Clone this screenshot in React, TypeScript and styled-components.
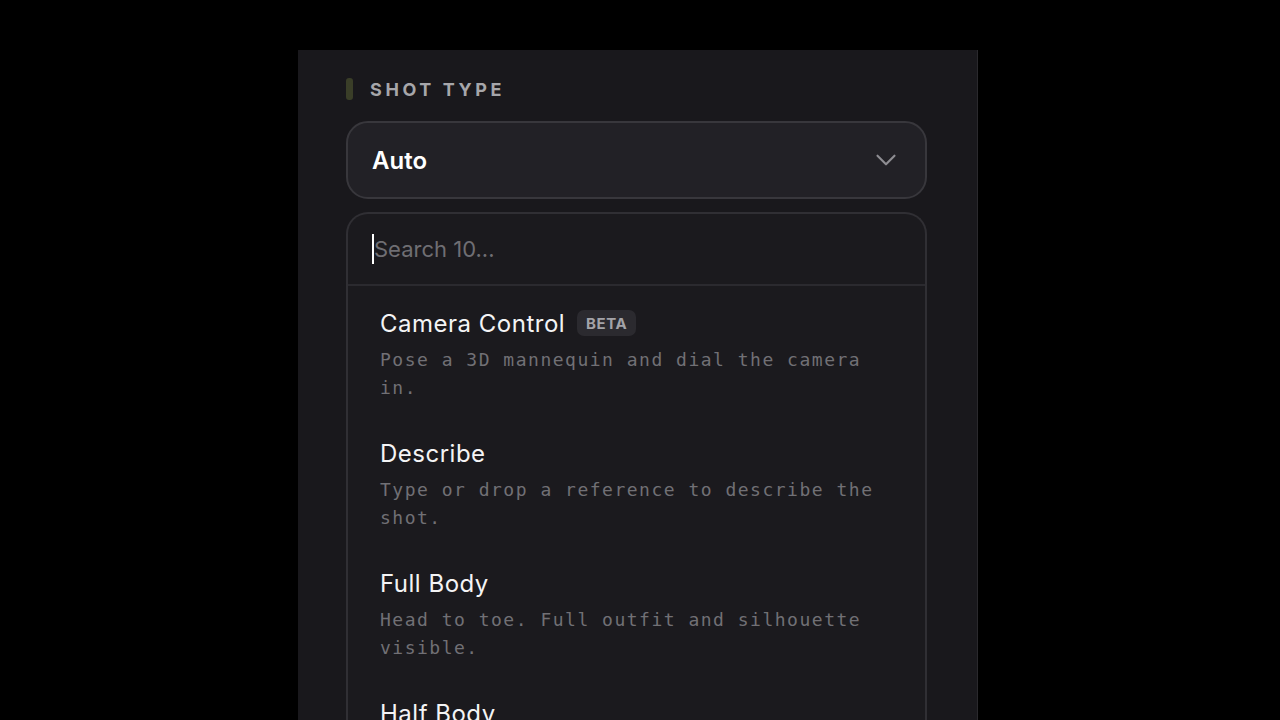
import { createGlobalStyle, styled } from 'styled-components'
import { ChevronDown } from 'lucide-react'

const GlobalStyle = createGlobalStyle`
  * {
    box-sizing: border-box;
  }

  html,
  body {
    margin: 0;
    padding: 0;
    background: #000;
    height: 100%;
    overflow: hidden;
  }

  body {
    font-family: Inter, 'Noto Sans', sans-serif;
    -webkit-font-smoothing: antialiased;
  }
`

const Page = styled.div`
  display: flex;
  justify-content: center;
  padding-top: 50px;
  height: 720px;
`

const Panel = styled.div`
  width: 680px;
  margin-left: -4px;
  min-height: 670px;
  background: #19181c;
  border-right: 1px solid #2a292d;
  padding: 28px 50px 0 48px;
  display: flex;
  flex-direction: column;
`

const SectionLabel = styled.div`
  display: flex;
  align-items: center;
  gap: 17px;
  height: 22px;
  flex-shrink: 0;

  span {
    font-size: 18px;
    font-weight: 700;
    letter-spacing: 0.2em;
    text-transform: uppercase;
    color: #a6a6aa;
  }
`

const LabelBar = styled.div`
  width: 7px;
  height: 22px;
  border-radius: 3px;
  background: #3a3e28;
`

const SelectButton = styled.button`
  margin-top: 21px;
  flex-shrink: 0;
  display: flex;
  align-items: center;
  justify-content: space-between;
  width: 100%;
  height: 78px;
  padding: 0 22px 0 24px;
  background: #222126;
  border: 2px solid #38373c;
  border-radius: 22px;
  color: #fff;
  font-family: Inter, sans-serif;
  font-size: 24px;
  font-weight: 600;
  cursor: pointer;

  svg {
    color: #8e8d92;
  }
`

const Dropdown = styled.div`
  margin-top: 13px;
  flex: 1;
  background: #1b1a1e;
  border: 2px solid #302f34;
  border-bottom: none;
  border-radius: 22px 22px 0 0;
  display: flex;
  flex-direction: column;
`

const SearchRow = styled.div`
  height: 72px;
  flex-shrink: 0;
  display: flex;
  align-items: center;
  padding: 0 24px;
  border-bottom: 2px solid #2b2a2f;
`

const Caret = styled.span`
  width: 2px;
  height: 30px;
  background: #fff;
  flex-shrink: 0;
`

const SearchInput = styled.input`
  width: 100%;
  padding: 0;
  background: transparent;
  border: none;
  outline: none;
  font-family: Inter, sans-serif;
  font-size: 22px;
  color: #fff;

  &::placeholder {
    color: #6f6e73;
  }
`

const OptionList = styled.ul`
  list-style: none;
  margin: 0;
  padding: 4px 0;
`

const OptionItem = styled.li`
  padding: 18px 32px;
  display: flex;
  flex-direction: column;
  gap: 8px;
`

const OptionTitle = styled.div`
  display: flex;
  align-items: center;
  gap: 12px;
  height: 30px;
  font-size: 24px;
  font-weight: 400;
  letter-spacing: 0.5px;
  color: #f4f4f5;
`

const Badge = styled.span`
  display: inline-flex;
  align-items: center;
  height: 26px;
  padding: 0 9px;
  border-radius: 7px;
  background: #2b2a2f;
  color: #a3a3a8;
  font-size: 15px;
  font-weight: 700;
  letter-spacing: 0.04em;
`

const OptionDescription = styled.p`
  margin: 0;
  font-family: 'DejaVu Sans Mono', 'Liberation Mono', monospace;
  font-size: 18px;
  line-height: 28px;
  letter-spacing: 1.5px;
  color: #717075;
`

const options = [
  {
    id: 'camera',
    title: 'Camera Control',
    badge: 'BETA',
    description: 'Pose a 3D mannequin and dial the camera in.',
  },
  {
    id: 'describe',
    title: 'Describe',
    description: 'Type or drop a reference to describe the shot.',
  },
  {
    id: 'full',
    title: 'Full Body',
    description: 'Head to toe. Full outfit and silhouette visible.',
  },
  {
    id: 'half',
    title: 'Half Body',
    description: 'Waist up. Balanced framing for outfit and face.',
  },
]

export default function App() {
  return (
    <>
      <GlobalStyle />
      <Page>
        <Panel>
          <SectionLabel>
            <LabelBar />
            <span>Shot type</span>
          </SectionLabel>
          <SelectButton>
            Auto
            <ChevronDown size={34} strokeWidth={1.5} />
          </SelectButton>
          <Dropdown>
            <SearchRow>
              <Caret />
              <SearchInput placeholder="Search 10..." />
            </SearchRow>
            <OptionList>
              {options.map((item) => (
                <OptionItem key={item.id}>
                  <OptionTitle>
                    {item.title}
                    {item.badge && <Badge>{item.badge}</Badge>}
                  </OptionTitle>
                  <OptionDescription>{item.description}</OptionDescription>
                </OptionItem>
              ))}
            </OptionList>
          </Dropdown>
        </Panel>
      </Page>
    </>
  )
}
